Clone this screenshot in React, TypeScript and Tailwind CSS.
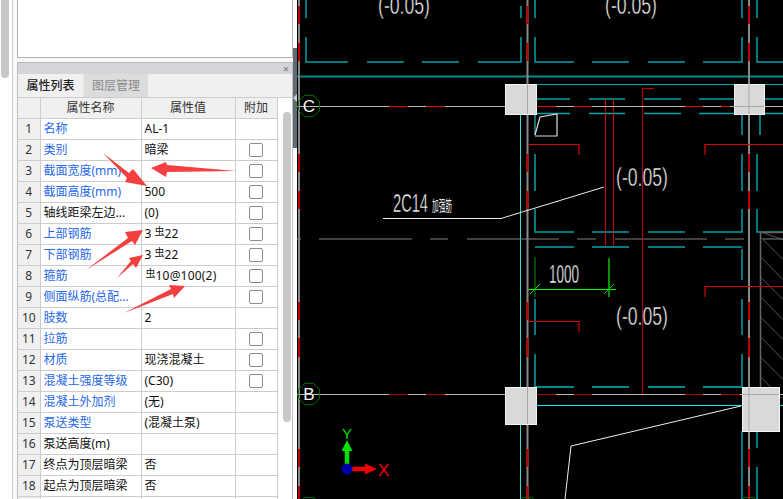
const rows = [
  { name: '名称', value: 'AL-1', blue: true, check: false },
  { name: '类别', value: '暗梁', blue: true, check: true },
  { name: '截面宽度(mm)', value: '', blue: true, check: true },
  { name: '截面高度(mm)', value: '500', blue: true, check: true },
  { name: '轴线距梁左边...', value: '(0)', blue: false, check: true },
  { name: '上部钢筋', value: '3|22', blue: true, check: true },
  { name: '下部钢筋', value: '3|22', blue: true, check: true },
  { name: '箍筋', value: '|10@100(2)', blue: true, check: true },
  { name: '侧面纵筋(总配...', value: '', blue: true, check: true },
  { name: '肢数', value: '2', blue: true, check: false },
  { name: '拉筋', value: '', blue: true, check: true },
  { name: '材质', value: '现浇混凝土', blue: true, check: true },
  { name: '混凝土强度等级', value: '(C30)', blue: true, check: true },
  { name: '混凝土外加剂', value: '(无)', blue: true, check: false },
  { name: '泵送类型', value: '(混凝土泵)', blue: true, check: false },
  { name: '泵送高度(m)', value: '', blue: false, check: false },
  { name: '终点为顶层暗梁', value: '否', blue: false, check: false },
  { name: '起点为顶层暗梁', value: '否', blue: false, check: false },
  { name: '', value: '', blue: false, check: false },
]

// value text uses | for the rebar grade symbol
const RebarValue = ({ value }: { value: string }) => {
  if (!value.includes('|')) return <>{value}</>
  const [before, after] = value.split('|')
  return (
    <>
      {before && <span className="mr-[3px]">{before}</span>}
      <span className={`relative top-[-3px] text-[10px] ${before ? '' : 'ml-px'}`}>虫</span>
      <span className="tracking-[0.2px]">{after}</span>
    </>
  )
}

const PropertyPanel = () => (
  <div className="flex min-w-0 flex-1 flex-col">
    <div className="h-[58px] shrink-0 border-x border-b border-[#b4b4b4] bg-white" />
    <div className="h-1 shrink-0" />
    <div className="flex min-h-0 flex-1 flex-col border-x border-t border-[#bdbdbd] bg-white">
      <div className="flex h-[11px] shrink-0 items-center justify-end bg-[#d3d5d8] pr-[3px] text-[11px] leading-none text-[#777]">×</div>
      <div className="flex h-[24px] shrink-0 items-end border-b border-[#cdcdcd] bg-[#f0f0f0] text-xs">
        <div className="flex h-[23px] w-[65px] items-center justify-center font-medium text-[#222]">属性列表</div>
        <div className="flex h-[23px] w-[65px] items-center justify-center border-l border-[#e8e8e8] bg-[#dcdcdc] text-[#8a8a8a]">图层管理</div>
      </div>
      <div className="flex min-h-0 flex-1">
        <table className="h-fit w-[259px] shrink-0 table-fixed border-collapse text-xs">
          <colgroup>
            <col className="w-[22px]" />
            <col className="w-[101px]" />
            <col className="w-[94px]" />
            <col className="w-[42px]" />
          </colgroup>
          <thead>
            <tr className="h-[20px] bg-[#f0f0f0] text-[#333]">
              <th className="border-r border-b border-[#cdcdcd] font-normal" />
              <th className="border-r border-b border-[#cdcdcd] font-normal">属性名称</th>
              <th className="border-r border-b border-[#cdcdcd] font-normal">属性值</th>
              <th className="border-r border-b border-[#cdcdcd] font-normal">附加</th>
            </tr>
          </thead>
          <tbody>
            {rows.map((row, i) => (
              <tr key={i} className="h-[21px]">
                <td className="border-r border-b border-[#cdcdcd] bg-[#f0f0f0] text-center text-[#333]">{row.name && i + 1}</td>
                <td className={`truncate border-r border-b border-[#cdcdcd] pl-[3px] ${row.blue ? 'text-[#2768e8]' : 'text-[#111]'}`}>{row.name}</td>
                <td className="truncate border-r border-b border-[#cdcdcd] pl-[3px] text-[#111]">
                  <RebarValue value={row.value} />
                </td>
                <td className="border-r border-b border-[#cdcdcd]">
                  {row.check && <span className="mx-auto block h-[14px] w-[14px] rounded-[2px] border border-[#8c8c8c] bg-white" />}
                </td>
              </tr>
            ))}
          </tbody>
        </table>
        <div className="flex-1 pl-[5px] pt-[14px]">
          <div className="h-[310px] w-2 rounded-full bg-[#c8c8c8]" />
        </div>
      </div>
    </div>
  </div>
)

const greyRed = {
  y: [[6, 24], [43, 61], [154, 172], [191, 209], [302, 320], [338, 357], [449, 467], [486, 499]],
  x: [[389, 408], [426, 445], [536, 556], [574, 592], [685, 703], [721, 740]],
}
const roomDashes = [[535, 574], [592, 629], [648, 685], [703, 742]]
const beamDashes = [[535, 570], [589, 625], [644, 681], [699, 734], [764, 783]]
const hatchStarts = [217, 237, 257, 277, 297, 317, 337, 357, 377]
const columns = [
  [505, 84, 31, 30],
  [734, 84, 30, 30],
  [505, 387, 31, 37],
  [742, 387, 37, 44],
]
const cadLabels = [
  [378, 14],
  [605, 14],
  [616, 186],
  [616, 325],
]
const octagon = (cx: number, cy: number) => {
  const pts = []
  for (let i = 0; i < 8; i++) {
    const a = (Math.PI / 4) * i + Math.PI / 8
    pts.push(`${cx + 11.5 * Math.cos(a)},${cy + 11.5 * Math.sin(a)}`)
  }
  return pts.join(' ')
}

const CadCanvas = () => (
  <svg className="block h-full w-full" viewBox="297 0 486 499" fontFamily="'Liberation Sans', sans-serif">
    {/* rooms */}
    <g stroke="#00a3a8" strokeWidth="1.5" fill="none">
      <path d="M306 0V18M306 37V62H348M367 62H404M422 62H459M478 62H521V37M521 18V6" />
      <path d="M535 0V18M535 37V62H574M592 62H629M648 62H685M703 62H742V37M742 18V0" />
      <path d="M757 0V18M757 37V62H783" />
      <path d="M535 154V191M535 209V232H574M592 232H629M648 232H685M703 232H742V209M742 191V154" />
      <path d="M742 114V135M760 114V135M757 154V191M757 209V232H783" />
      <path d="M535 299V335M535 354V387M742 249V280M742 299V335M742 354V387M742 431V499M757 431V448M757 467V499" />
      {roomDashes.map(([a, b]) => <path key={`r${a}`} d={`M${a} 247H${b}`} />)}
      {beamDashes.map(([a, b]) => <path key={`b${a}`} d={`M${a} 99H${b}M${a} 113.5H${b}`} />)}
    </g>
    <path d="M297 76.5H783" stroke="#008b8b" strokeWidth="2" />
    <path d="M505 84.5H783" stroke="#00b0b0" />
    <g stroke="#008b8b" strokeWidth="2">
      {roomDashes.map(([a, b]) => <path key={`g${a}`} d={`M${a} 387H${b}`} />)}
    </g>
    <path d="M520.5 114V387M520.5 424V499M535 114V135" stroke="#30dede" />
    <path d="M536 405.5H742M779 405.5H783" stroke="#00f0f0" />

    {/* hatch */}
    <g stroke="#555">
      <path d="M760.5 232V387M760 232.5H783" stroke="#666" strokeWidth="1.5" />
      {hatchStarts.map((y) => <path key={y} d={`M760.5 ${Math.max(y, 232)}L${783} ${y + 22.5}`} />)}
    </g>

    {/* reference lines */}
    <g stroke="#8a8a8a" strokeWidth="2">
      <path d="M299 0V499M527.5 0V499M749 0V499" />
    </g>
    <g stroke="#c00000" strokeWidth="2">
      {[299, 527.5, 749].map((x) =>
        greyRed.y.map(([a, b]) => <path key={`${x}-${a}`} d={`M${x} ${a}V${b}`} />),
      )}
    </g>
    <path d="M297 239H301M319 239H412M430 239H448M467 239H559M577 239H596M615 239H707M725 239H744M763 239H783" stroke="#808080" />

    {/* red rebar */}
    <g stroke="#d80000" fill="none">
      <path d="M528 144.5H579V155M705 155V144.5H783M528 321.5H579V332M705 297V286.5H783" strokeWidth="1.2" />
      <path d="M605.5 99V246M613.5 99V246" />
      <path d="M654 88.5H642.5V394" stroke="#c00000" />
    </g>

    {/* axis lines */}
    <path d="M297 106.5H783M297 394.5H783" stroke="#b8b8b8" />
    {greyRed.x.map(([a, b]) => <path key={a} d={`M${a} 106.5H${b}`} stroke="#f00000" />)}
    {greyRed.x.map(([a, b]) => <path key={a} d={`M${a} 394.5H${b}`} stroke="#b00000" />)}

    {/* columns */}
    {columns.map(([x, y, w, h]) => (
      <rect key={`${x}-${y}`} x={x + 0.5} y={y + 0.5} width={w} height={h} fill="#d9d9d9" stroke="#f4f4f4" />
    ))}
    <path d="M527.5 84V114M749 84V114M527.5 387V424M749 387V431M730 106.5H764M742 394.5H779" stroke="#a8a8a8" />

    {/* axis bubbles */}
    <g fill="none" stroke="#007000">
      <polygon points={octagon(309, 106)} />
      <polygon points={octagon(309, 394)} />
      <polygon points={octagon(309, 508)} />
      <polygon points={octagon(527.5, 508)} />
      <polygon points={octagon(749, 508)} />
    </g>
    <text x="309" y="112" textAnchor="middle" fontSize="17" fill="#f4f4f4">C</text>
    <text x="309" y="400" textAnchor="middle" fontSize="17" fill="#f4f4f4">B</text>

    {/* small opening */}
    <path d="M535 135L540 117L557 114V136H535" fill="none" stroke="#dcdcdc" strokeWidth="1.2" />

    {/* leaders */}
    <path d="M383 218.5H501L604 187M741 406L571 446L565 499" fill="none" stroke="#eeeeee" />

    {/* dimension */}
    <path d="M528 289.5H616" stroke="#00ff00" />
    <path d="M535 257V297" stroke="#009000" />
    <path d="M609 258V297" stroke="#009000" strokeWidth="2" />
    <path d="M530 294L540 284M604 294L614 284" stroke="#00e000" />

    {/* CAD text is thin, so a black stroke eats into the glyphs */}
    <g stroke="#000" strokeWidth="0.5">
      <text x="549" y="283" fontSize="26" fill="#ffffff" textLength="30" lengthAdjust="spacingAndGlyphs">1000</text>
      {cadLabels.map(([x, y]) => (
        <text key={`${x}-${y}`} x={x} y={y} fontSize="26" fill="#f4f4f4" textLength="52" lengthAdjust="spacingAndGlyphs">(-0.05)</text>
      ))}
      <text x="393" y="212" fontSize="26" fill="#ffffff" textLength="35" lengthAdjust="spacingAndGlyphs">2C14</text>
    </g>
    <text x="432" y="211" fontSize="15" fontFamily="'Noto Sans CJK SC', sans-serif" fill="#eeeeee" textLength="20" lengthAdjust="spacingAndGlyphs">加强筋</text>

    {/* UCS icon */}
    <path d="M347 469V449" stroke="#00e000" strokeWidth="4.5" />
    <polygon points="347,440 352.5,451 341.5,451" fill="#00e000" />
    <text x="347" y="439" textAnchor="middle" fontSize="15" fill="#00e000">Y</text>
    <path d="M350 469H366" stroke="#f00000" strokeWidth="4.5" />
    <polygon points="377,469 365,463.5 365,474.5" fill="#f00000" />
    <text x="378" y="476" fontSize="17" fill="#f00000">X</text>
    <circle cx="347" cy="469" r="5.5" fill="#0000a8" />
  </svg>
)

const App = () => (
  <div className="relative flex h-[499px] w-[783px] overflow-hidden bg-white font-['Noto_Sans','Noto_Sans_CJK_SC',sans-serif]">
    <aside className="flex w-[297px] shrink-0">
      <div className="ml-px h-[78px] w-2 shrink-0 rounded-b-full bg-[#c8c8c8]" />
      <div className="ml-[3px] flex min-w-0 flex-1 border-l border-[#cccccc] bg-[#f8f8f8] pl-1">
        <PropertyPanel />
      </div>
      <div className="w-1 shrink-0 bg-white">
        <div className="mt-[48px] flex h-[100px] items-center bg-[#5f6b76]">
          <div className="h-0 w-0 border-y-[4px] border-r-[4px] border-y-transparent border-r-[#c8ccd0]" />
        </div>
      </div>
    </aside>
    <main className="min-w-0 flex-1 bg-black">
      <CadCanvas />
    </main>
    {/* annotation arrows pasted over the screenshot */}
    <svg className="pointer-events-none absolute top-0 left-0" width="783" height="499" fill="#f43f3f">
      <polygon points="103,153 129,173 133,169 147,186 125,182 127,178" />
      <polygon points="151,168 166,162 167,165 236,171 167,172 166,177" />
      <polygon points="86,270 128,238 125,232 143,230 135,245 132,241" />
      <polygon points="117,278 131,261 129,258 143,255 136,268 133,264" />
      <polygon points="124,313 171,289 169,285 185,286 174,298 173,294" />
    </svg>
  </div>
)

export default App
